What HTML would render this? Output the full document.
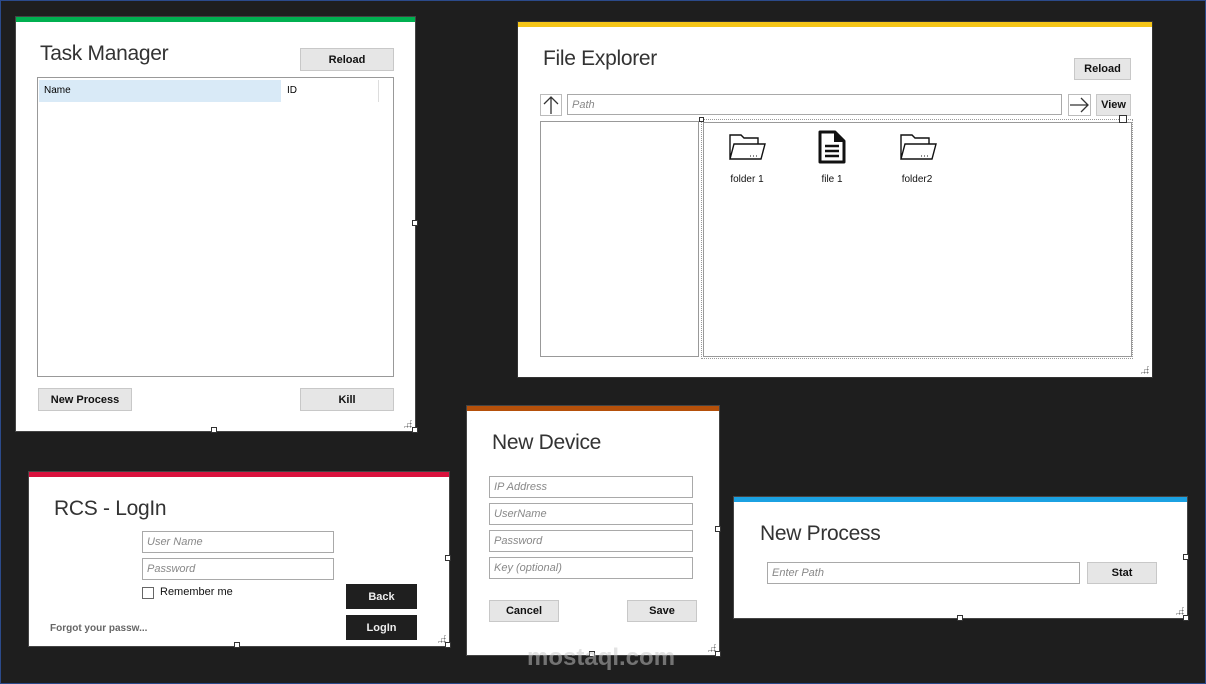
<!DOCTYPE html>
<html><head><meta charset="utf-8"><style>
*{box-sizing:border-box;margin:0;padding:0}
body{width:1206px;height:684px;background:#1e1e1e;position:relative;overflow:hidden;font-family:"Liberation Sans",sans-serif}
.frame{position:absolute;left:0;top:0;width:1206px;height:684px;border:1px solid #2b4a8a}
.f{position:absolute;background:#fff;border:1px solid #444}
.bar{position:absolute;left:0;right:0;top:0;height:5px}
.a{position:absolute}
.t{position:absolute;font-size:21px;color:#333;font-weight:normal;letter-spacing:-0.3px}
.btn,.dbtn{position:absolute;font-size:11px;font-weight:bold;display:flex;align-items:center;justify-content:center}
.btn{background:#e6e6e6;border:1px solid #c8c8c8;color:#111}
.dbtn{background:#1f1f1f;color:#eee}
.in{position:absolute;border:1px solid #a9a9a9;font-size:11px;font-style:italic;color:#888;padding-left:4px;background:#fff;display:flex;align-items:center}
.grip{position:absolute;right:3px;bottom:3px;width:9px;height:9px;background:radial-gradient(circle,#777 45%,transparent 50%) 0 0/3px 3px;clip-path:polygon(100% 0,100% 100%,0 100%)}
.h{position:absolute;width:6px;height:6px;background:#fff;border:1px solid #333}
.lbl{position:absolute;font-size:10px;color:#111;text-align:center;width:60px}
</style></head><body>
<div class="frame"></div>

<!-- Task Manager -->
<div class="f" style="left:15px;top:16px;width:401px;height:416px">
<div class="bar" style="background:#00b050"></div>
<div class="t" style="left:24px;top:25px">Task Manager</div>
<div class="btn" style="left:284px;top:31px;width:94px;height:23px">Reload</div>
<div class="a" style="left:21px;top:60px;width:357px;height:300px;border:1px solid #999"></div>
<div class="a" style="left:23px;top:63px;width:242px;height:22px;background:#d9eaf7;font-size:10px;line-height:22px;padding-left:5px">Name</div>
<div class="a" style="left:269px;top:63px;width:94px;height:22px;font-size:10px;line-height:22px;padding-left:2px;border-right:1px solid #ddd">ID</div>
<div class="btn" style="left:22px;top:371px;width:94px;height:23px">New Process</div>
<div class="btn" style="left:284px;top:371px;width:94px;height:23px">Kill</div>
<div class="grip"></div>
</div>
<div class="h" style="left:412px;top:220px"></div><div class="h" style="left:211px;top:427px"></div><div class="h" style="left:412px;top:427px"></div>

<!-- File Explorer -->
<div class="f" style="left:517px;top:21px;width:636px;height:357px;border-color:#333">
<div class="bar" style="background:#f5c518"></div>
<div class="t" style="left:25px;top:25px">File Explorer</div>
<div class="btn" style="left:556px;top:36px;width:57px;height:22px">Reload</div>
<div class="a" style="left:22px;top:72px;width:22px;height:22px;border:1px solid #bbb"><svg width="20" height="20" viewBox="0 0 20 20"><path d="M10 19V2M3 9l7-7 7 7" fill="none" stroke="#333" stroke-width="1.3"/></svg></div>
<div class="in" style="left:49px;top:72px;width:495px;height:21px">Path</div>
<div class="a" style="left:550px;top:72px;width:23px;height:22px;border:1px solid #bbb"><svg width="21" height="20" viewBox="0 0 21 20"><path d="M1 10h18M12 3l7 7-7 7" fill="none" stroke="#333" stroke-width="1.3"/></svg></div>
<div class="btn" style="left:578px;top:72px;width:35px;height:22px">View</div>
<div class="a" style="left:22px;top:99px;width:159px;height:236px;border:1px solid #999"></div>
<div class="a" style="left:183px;top:97px;width:432px;height:240px;border:1px dotted #999"></div>
<div class="a" style="left:185px;top:100px;width:429px;height:235px;border:1px solid #999"></div>
<div class="h" style="left:181px;top:95px;width:5px;height:5px"></div>
<div class="h" style="left:601px;top:93px;width:8px;height:8px"></div>
<svg class="a" style="left:210px;top:109px" width="38" height="30" viewBox="0 0 38 30"><path d="M2 28V4h11l3 3h14v6M2 28l4-15h31l-4 15z" fill="none" stroke="#111" stroke-width="1.4"/><path d="M22 25h1M25 25h1M28 25h1" stroke="#111"/></svg>
<svg class="a" style="left:299px;top:107px" width="30" height="36" viewBox="0 0 30 36"><path d="M3 3h15l9 9v21H3z" fill="none" stroke="#111" stroke-width="3" stroke-linejoin="round"/><path d="M8 17h14M8 22h14M8 27h14" stroke="#111" stroke-width="2.5"/><path d="M17 3v10h10" fill="#111"/></svg>
<svg class="a" style="left:381px;top:109px" width="38" height="30" viewBox="0 0 38 30"><path d="M2 28V4h11l3 3h14v6M2 28l4-15h31l-4 15z" fill="none" stroke="#111" stroke-width="1.4"/><path d="M22 25h1M25 25h1M28 25h1" stroke="#111"/></svg>
<div class="lbl" style="left:199px;top:152px">folder 1</div>
<div class="lbl" style="left:284px;top:152px">file 1</div>
<div class="lbl" style="left:369px;top:152px">folder2</div>
<div class="grip"></div>
</div>

<!-- RCS LogIn -->
<div class="f" style="left:28px;top:471px;width:422px;height:176px">
<div class="bar" style="background:#d9123d"></div>
<div class="t" style="left:25px;top:25px">RCS - LogIn</div>
<div class="in" style="left:113px;top:59px;width:192px;height:22px">User Name</div>
<div class="in" style="left:113px;top:86px;width:192px;height:22px">Password</div>
<div class="a" style="left:113px;top:115px;width:12px;height:12px;border:1px solid #666"></div>
<div class="a" style="left:131px;top:114px;font-size:11px;color:#111">Remember me</div>
<div class="dbtn" style="left:317px;top:112px;width:71px;height:25px">Back</div>
<div class="dbtn" style="left:317px;top:143px;width:71px;height:25px">LogIn</div>
<div class="a" style="left:21px;top:151px;font-size:10px;font-weight:bold;color:#666">Forgot your passw...</div>
<div class="grip"></div>
</div>
<div class="h" style="left:445px;top:555px"></div><div class="h" style="left:234px;top:642px"></div><div class="h" style="left:445px;top:642px"></div>

<!-- New Device -->
<div class="f" style="left:466px;top:405px;width:254px;height:251px">
<div class="bar" style="background:#b5500a"></div>
<div class="t" style="left:25px;top:25px">New Device</div>
<div class="in" style="left:22px;top:70px;width:204px;height:22px">IP Address</div>
<div class="in" style="left:22px;top:97px;width:204px;height:22px">UserName</div>
<div class="in" style="left:22px;top:124px;width:204px;height:22px">Password</div>
<div class="in" style="left:22px;top:151px;width:204px;height:22px">Key (optional)</div>
<div class="btn" style="left:22px;top:194px;width:70px;height:22px">Cancel</div>
<div class="btn" style="left:160px;top:194px;width:70px;height:22px">Save</div>
<div class="grip"></div>
</div>
<div class="h" style="left:715px;top:526px"></div><div class="h" style="left:589px;top:651px"></div><div class="h" style="left:715px;top:651px"></div>
<div class="a" style="left:527px;top:644px;font-size:24px;font-weight:bold;color:rgba(200,200,200,0.5)">mostaql.com</div>

<!-- New Process -->
<div class="f" style="left:733px;top:496px;width:455px;height:123px">
<div class="bar" style="background:#1ba1e2"></div>
<div class="t" style="left:26px;top:25px">New Process</div>
<div class="in" style="left:33px;top:65px;width:313px;height:22px">Enter Path</div>
<div class="btn" style="left:353px;top:65px;width:70px;height:22px">Stat</div>
<div class="grip"></div>
</div>
<div class="h" style="left:1183px;top:554px"></div><div class="h" style="left:957px;top:615px"></div><div class="h" style="left:1183px;top:615px"></div>
</body></html>
